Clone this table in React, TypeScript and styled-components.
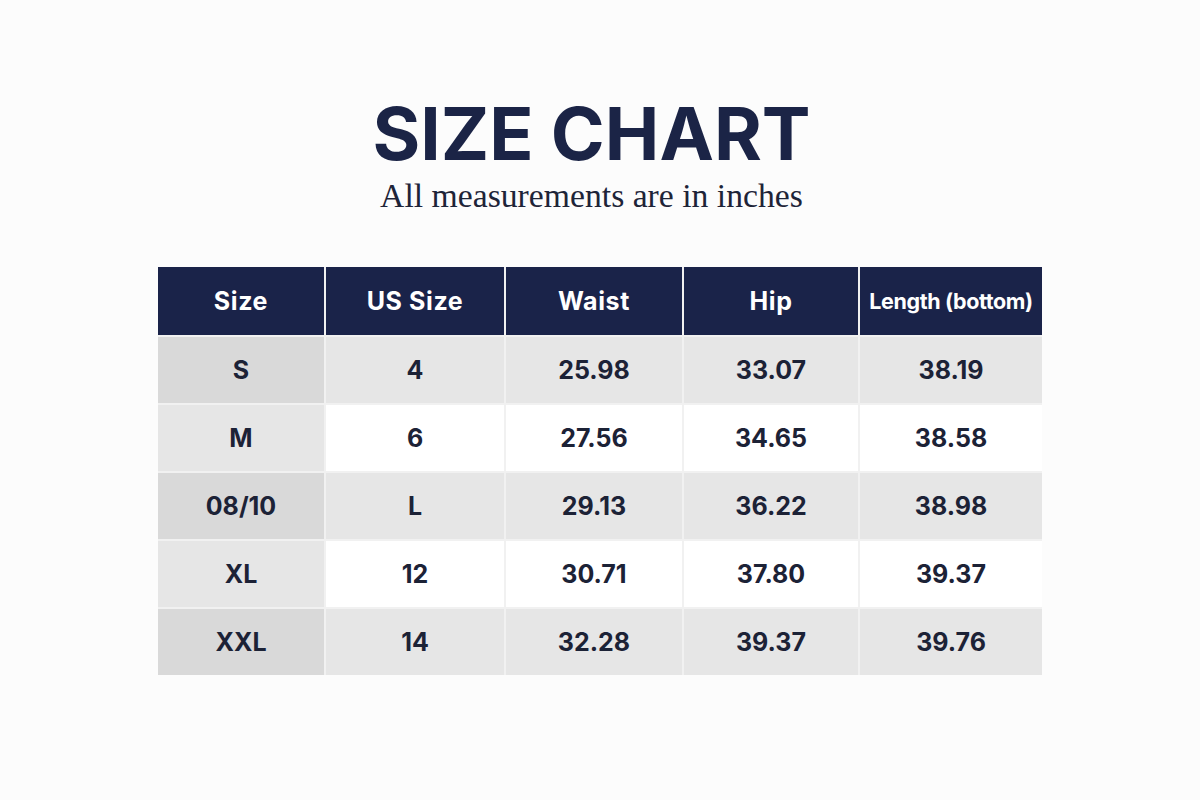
import React from "react";
import styled, { createGlobalStyle } from "styled-components";

const Global = createGlobalStyle`
  html, body { margin: 0; padding: 0; background: #fcfcfc; }
  body { font-family: Inter, Roboto, "Liberation Sans", sans-serif; }
`;

const Page = styled.div`
  width: 1200px;
  height: 800px;
  display: flex;
  flex-direction: column;
  align-items: center;
  background: #fcfcfc;
`;

const Heading = styled.header`
  display: flex;
  flex-direction: column;
  align-items: center;
  margin: 92px 17px 0 0;
`;

const Title = styled.h1`
  margin: 0;
  font-family: Inter, Roboto, "Liberation Sans", sans-serif;
  font-weight: 700;
  font-size: 73px;
  line-height: 84px;
  color: #1b2446;
`;

const Subtitle = styled.p`
  margin: 0;
  font-family: "Liberation Serif", "Times New Roman", serif;
  font-size: 33.7px;
  line-height: 40px;
  color: #1e2438;
`;

const Grid = styled.div`
  margin-top: 51px;
  display: grid;
  grid-template-columns: 166px 178px 176px 174px 182px;
  grid-template-rows: 68px repeat(5, 66px);
  gap: 2px;
  background: #f1f1f1;
`;

const HeadCell = styled.div<{ $small?: boolean }>`
  display: flex;
  align-items: center;
  justify-content: center;
  background: #1a2349;
  color: #ffffff;
  font-weight: 700;
  font-size: ${(p) => (p.$small ? "21.5px" : "25px")};
  letter-spacing: ${(p) => (p.$small ? "-0.4px" : "0.6px")};
  white-space: nowrap;
`;

const Cell = styled.div<{ $bg: string }>`
  display: flex;
  align-items: center;
  justify-content: center;
  background: ${(p) => p.$bg};
  color: #1c2236;
  font-weight: 700;
  font-size: 25px;
`;

const headers = ["Size", "US Size", "Waist", "Hip", "Length (bottom)"];
const rows = [
  ["S", "4", "25.98", "33.07", "38.19"],
  ["M", "6", "27.56", "34.65", "38.58"],
  ["08/10", "L", "29.13", "36.22", "38.98"],
  ["XL", "12", "30.71", "37.80", "39.37"],
  ["XXL", "14", "32.28", "39.37", "39.76"],
];

export default function App() {
  return (
    <>
      <Global />
      <Page>
        <Heading>
          <Title>SIZE CHART</Title>
          <Subtitle>All measurements are in inches</Subtitle>
        </Heading>
        <Grid>
          {headers.map((h, i) => (
            <HeadCell key={h} $small={i === 4}>
              {h}
            </HeadCell>
          ))}
          {rows.map((r, ri) =>
            r.map((c, ci) => {
              const odd = ri % 2 === 0;
              const bg =
                ci === 0
                  ? odd
                    ? "#d9d9d9"
                    : "#e6e6e6"
                  : odd
                  ? "#e6e6e6"
                  : "#ffffff";
              return (
                <Cell key={`${ri}-${ci}`} $bg={bg}>
                  {c}
                </Cell>
              );
            })
          )}
        </Grid>
      </Page>
    </>
  );
}
